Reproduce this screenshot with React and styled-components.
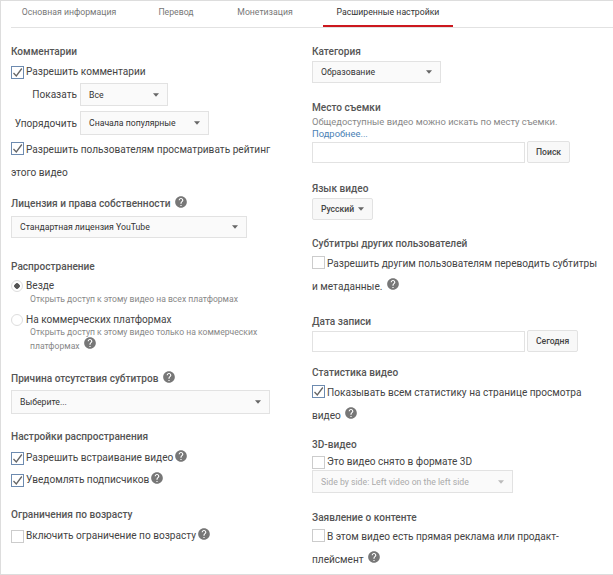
import React from "react";
import styled, { createGlobalStyle } from "styled-components";
import { MdHelp } from "react-icons/md";

const GlobalStyle = createGlobalStyle`
  html, body { margin: 0; padding: 0; background: #fff; }
  body { font-family: Roboto, "Liberation Sans", sans-serif; color: #444; }
`;

const Help = () => <HelpIcon />;

const Caret = ({ $disabled }) => (
  <CaretMark viewBox="0 0 7 4" $disabled={$disabled}>
    <path d="M0 0h7L3.5 4z" />
  </CaretMark>
);

const Check = ({ checked }) => (
  <CheckBox $checked={checked}>
    {checked && (
      <svg viewBox="0 0 13 13" width="13" height="13">
        <path d="M2.5 7l2.8 3L10.8 2.5" fill="none" stroke="#666" strokeWidth="1.3" />
      </svg>
    )}
  </CheckBox>
);

const Select = ({ children, width, top, disabled, height }) => (
  <SelectBox $width={width} $top={top} $disabled={disabled} $height={height}>
    <span>{children}</span>
    <Caret $disabled={disabled} />
  </SelectBox>
);

const App = () => (
  <Page>
    <GlobalStyle />
    <Tabs>
      <Tab $width={116}>Основная информация</Tab>
      <Tab $width={98}>Перевод</Tab>
      <Tab $width={80}>Монетизация</Tab>
      <Tab $width={130} $active>Расширенные настройки</Tab>
    </Tabs>
    <Columns>
      <Column>
        <Heading $top={17}>Комментарии</Heading>
        <CheckRow $top={6}><Check checked />Разрешить комментарии</CheckRow>
        <SelectRow $top={4}>
          <RowLabel>Показать</RowLabel>
          <Select width={88} height={23}>Все</Select>
        </SelectRow>
        <SelectRow $top={5}>
          <RowLabel>Упорядочить</RowLabel>
          <Select width={129} height={24}>Сначала популярные</Select>
        </SelectRow>
        <WrapRow $top={4} $width={285}>
          <Check checked />Разрешить пользователям просматривать рейтинг этого видео
        </WrapRow>

        <Heading $top={13}>Лицензия и права собственности <Help /></Heading>
        <Select width={236} top={5}>Стандартная лицензия YouTube</Select>

        <Heading $top={22}>Распространение</Heading>
        <CheckRow $top={5}><Radio $on />Везде</CheckRow>
        <Hint>Открыть доступ к этому видео на всех платформах</Hint>
        <CheckRow $top={8}><Radio />На коммерческих платформах</CheckRow>
        <Hint $wide>Открыть доступ к этому видео только на коммерческих платформах <Help /></Hint>

        <Heading $top={19}>Причина отсутствия субтитров <Help /></Heading>
        <Select width={259} top={4} height={24}>Выберите...</Select>

        <Heading $top={16}>Настройки распространения</Heading>
        <CheckRow $top={7}><Check checked />Разрешить встраивание видео <Help /></CheckRow>
        <CheckRow $top={8}><Check checked />Уведомлять подписчиков <Help /></CheckRow>

        <Heading $top={21}>Ограничения по возрасту</Heading>
        <CheckRow $top={7}><Check />Включить ограничение по возрасту <Help /></CheckRow>
      </Column>

      <Column>
        <Heading $top={17}>Категория</Heading>
        <Select width={129} top={2}>Образование</Select>

        <Heading $top={18}>Место съемки</Heading>
        <Note $top={1}>Общедоступные видео можно искать по месту съемки.<br /><MoreLink>Подробнее...</MoreLink></Note>
        <InputRow>
          <TextInput />
          <GreyButton>Поиск</GreyButton>
        </InputRow>

        <Heading $top={19}>Язык видео</Heading>
        <LangButton>Русский <Caret /></LangButton>

        <Heading $top={17}>Субтитры других пользователей</Heading>
        <WrapRow $top={2} $width={290}>
          <Check />Разрешить другим пользователям переводить субтитры и метаданные. <Help />
        </WrapRow>

        <Heading $top={17}>Дата записи</Heading>
        <InputRow>
          <TextInput />
          <GreyButton>Сегодня</GreyButton>
        </InputRow>

        <Heading $top={14}>Статистика видео</Heading>
        <WrapRow $top={2} $width={290}>
          <Check checked />Показывать всем статистику на странице просмотра видео <Help />
        </WrapRow>

        <Heading $top={11}>3D-видео</Heading>
        <CheckRow $top={3}><Check />Это видео снято в формате 3D</CheckRow>
        <Select width={201} top={1} height={23} disabled>Side by side: Left video on the left side</Select>

        <Heading $top={18}>Заявление о контенте</Heading>
        <WrapRow $top={1} $width={290}>
          <Check />В этом видео есть прямая реклама или продакт-плейсмент <Help />
        </WrapRow>
      </Column>
    </Columns>
  </Page>
);

const Page = styled.div`
  box-sizing: border-box;
  width: 613px;
  height: 575px;
  overflow: hidden;
  border: 1px solid #ddd;
  border-right: 0;
  font-size: 10.1px;
`;

const Tabs = styled.div`
  display: flex;
  margin-left: 10px;
  height: 26px;
  border-bottom: 1px solid #e2e2e2;
`;

const Tab = styled.div`
  box-sizing: border-box;
  width: ${(p) => p.$width}px;
  margin-left: ${(p) => (p.$active ? 18 : 0)}px;
  flex: none;
  text-align: center;
  line-height: 22px;
  font-size: 8.7px;
  color: ${(p) => (p.$active ? "#333" : "#777")};
  height: 26px;
  border-bottom: ${(p) => (p.$active ? "2px solid #cc181e" : "0")};
`;

const Columns = styled.div`
  display: grid;
  grid-template-columns: 301px 1fr;
  padding-left: 10px;
`;

const Column = styled.div`
  display: flex;
  flex-direction: column;
  align-items: flex-start;
  min-width: 0;
`;

const Heading = styled.div`
  margin-top: ${(p) => p.$top}px;
  line-height: 14px;
  height: 14px;
  font-size: 10.1px;
  font-weight: 500;
  color: #555;
  display: flex;
  align-items: center;
  gap: 3px;
`;

const CheckRow = styled.div`
  margin-top: ${(p) => p.$top}px;
  height: 14px;
  line-height: 14px;
  display: flex;
  align-items: center;
  white-space: nowrap;
  color: #444;
`;

const WrapRow = styled.div`
  margin-top: ${(p) => p.$top}px;
  width: ${(p) => p.$width}px;
  line-height: 22.5px;
  color: #444;
`;

const CheckBox = styled.span`
  box-sizing: border-box;
  display: inline-block;
  width: 13px;
  height: 13px;
  margin-right: 2px;
  vertical-align: -2px;
  flex: none;
  border: 1px solid ${(p) => (p.$checked ? "#6d8bb0" : "#ccc")};
  background: #fff;
  svg { display: block; margin: -1px; }
`;

const Radio = styled.span`
  box-sizing: border-box;
  flex: none;
  width: 12px;
  height: 12px;
  margin-right: 3px;
  border-radius: 50%;
  border: 1px solid #ddd;
  background: ${(p) => (p.$on ? "radial-gradient(circle, #555 0 2.5px, #fff 3px)" : "#fff")};
`;

const Hint = styled.div`
  margin-left: 19px;
  margin-top: ${(p) => (p.$wide ? -2 : 0)}px;
  width: ${(p) => (p.$wide ? "235px" : "auto")};
  font-size: 8.6px;
  line-height: ${(p) => (p.$wide ? 14 : 12)}px;
  color: #888;
`;

const Note = styled.div`
  margin-top: ${(p) => p.$top}px;
  font-size: 9.4px;
  line-height: 12px;
  color: #888;
`;

const MoreLink = styled.a`
  color: #4a7fb5;
`;

const SelectRow = styled.div`
  margin-top: ${(p) => p.$top}px;
  display: flex;
  align-items: center;
  gap: 3px;
`;

const RowLabel = styled.span`
  width: 66px;
  text-align: right;
  color: #444;
`;

const SelectBox = styled.div`
  box-sizing: border-box;
  margin-top: ${(p) => p.$top || 0}px;
  width: ${(p) => p.$width}px;
  height: ${(p) => p.$height || 22}px;
  padding: 0 8px;
  display: flex;
  align-items: center;
  justify-content: space-between;
  font-size: 8.7px;
  color: ${(p) => (p.$disabled ? "#aaa" : "#333")};
  background: #fafafa;
  border: 1px solid #e2e2e2;
`;

const CaretMark = styled.svg`
  width: 6px;
  height: 4px;
  flex: none;
  fill: ${(p) => (p.$disabled ? "#bbb" : "#666")};
`;

const InputRow = styled.div`
  display: flex;
  align-items: flex-end;
  gap: 2px;
  margin-top: 1px;
`;

const TextInput = styled.div`
  box-sizing: border-box;
  width: 213px;
  height: 21px;
  background: #fff;
  border: 1px solid #e2e2e2;
`;

const GreyButton = styled.button`
  box-sizing: border-box;
  height: 22px;
  padding: 0 8px;
  font: 500 8.6px Roboto, sans-serif;
  color: #444;
  background: #f8f8f8;
  border: 1px solid #e2e2e2;
  border-radius: 2px;
`;

const LangButton = styled(GreyButton)`
  margin-top: 2px;
  width: 61px;
  padding: 0;
  display: flex;
  align-items: center;
  justify-content: center;
  gap: 4px;
`;

const HelpIcon = styled(MdHelp)`
  width: 14px;
  height: 14px;
  color: #777;
  vertical-align: -1px;
  margin-top: -5px;
  margin-left: 1px;
`;

export default App;
